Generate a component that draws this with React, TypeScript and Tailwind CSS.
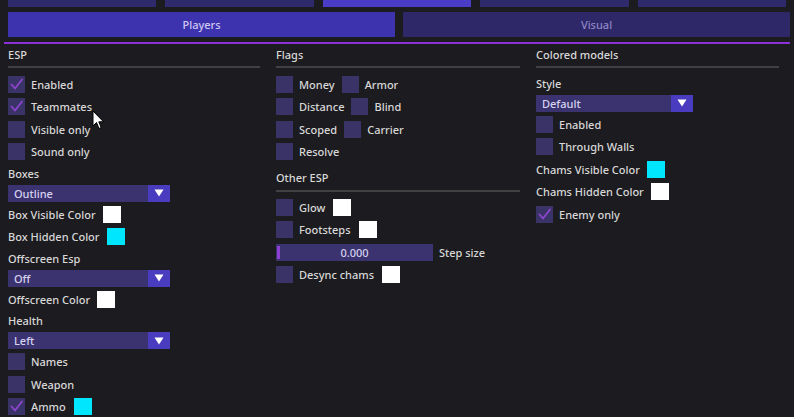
import React from 'react'

const Check = ({ checked = false }: { checked?: boolean }) => (
  <div className="w-[17px] h-[17px] shrink-0 bg-[#3a3367] flex items-center justify-center">
    {checked && (
      <svg width="17" height="17" viewBox="0 0 17 17">
        <path d="M3.5 8.5 L7 12.5 L14 3.5" fill="none" stroke="#8e45cf" strokeWidth="1.8" strokeLinecap="round" strokeLinejoin="round" />
      </svg>
    )}
  </div>
)

const Swatch = ({ color }: { color: string }) => (
  <div className="w-[18px] h-[17px] shrink-0" style={{ backgroundColor: color }} />
)

const CheckRow = ({ label, checked, swatch }: { label: string; checked?: boolean; swatch?: string }) => (
  <div className="h-[22.5px] flex items-center">
    <Check checked={checked} />
    <span className="ml-[6px]">{label}</span>
    {swatch && <div className="ml-[8px]"><Swatch color={swatch} /></div>}
  </div>
)

const ColorRow = ({ label, color }: { label: string; color: string }) => (
  <div className="h-[22.5px] flex items-center gap-[7px]">
    <span>{label}</span>
    <Swatch color={color} />
  </div>
)

const LabelRow = ({ label }: { label: string }) => (
  <div className="h-[20px] flex items-center">{label}</div>
)

const Combo = ({ value, width }: { value: string; width: string }) => (
  <div className="h-[20px] flex items-center">
    <div className={`${width} h-[17px] flex bg-[#3b336f]`}>
      <div className="flex-1 pl-[6px] flex items-center text-[#d6d2f0]">{value}</div>
      <div className="w-[22px] bg-[#4a3cbf] flex items-center justify-center">
        <svg width="10" height="8" viewBox="0 0 10 8">
          <path d="M0.5 0.5 H9.5 L5 7.5 Z" fill="#ffffff" />
        </svg>
      </div>
    </div>
  </div>
)

const Header = ({ title, first }: { title: string; first?: boolean }) => (
  <div className={first ? '' : 'mt-[4px]'}>
    <div className="h-[20px] flex items-center">{title}</div>
    <div className={`${first ? 'mt-[2px]' : 'mt-[3px]'} h-[2px] bg-[#414141]`} />
    <div className={first ? 'h-[5px]' : 'h-[4px]'} />
  </div>
)

export default function App() {
  return (
    <div className="relative w-[794px] h-[417px] overflow-hidden bg-[#1c1b1f] text-[11px] font-medium text-[#d8d8d8] font-['Noto_Sans',sans-serif] leading-none">
      {/* top tab strip, cut off by the window */}
      <div className="flex gap-[9px] px-[8px] h-[7px]">
        <div className="flex-1 bg-[#2f2a6c]" />
        <div className="flex-1 bg-[#2f2a6c]" />
        <div className="flex-1 bg-[#4a3cc6]" />
        <div className="flex-1 bg-[#2f2a6c]" />
        <div className="flex-1 bg-[#2f2a6c]" />
      </div>

      <div className="mt-[5px] flex gap-[8px] pl-[8px] pr-[4px] h-[25px]">
        <div className="flex-1 bg-[#3e33ae] flex items-center justify-center text-[#cdc8f4]">Players</div>
        <div className="flex-1 bg-[#2e2868] flex items-center justify-center text-[#8d86c6]">Visual</div>
      </div>

      <div className="mt-[5px] mx-[4px] h-[2px] bg-[#8b2fd6]" />

      <div className="grid grid-cols-[252px_244px_243px] gap-x-[16px] pl-[8px]">
        <div>
          <Header title="ESP" first />
          <CheckRow label="Enabled" checked />
          <CheckRow label="Teammates" checked />
          <CheckRow label="Visible only" />
          <CheckRow label="Sound only" />
          <LabelRow label="Boxes" />
          <Combo value="Outline" width="w-[162px]" />
          <ColorRow label="Box Visible Color" color="#ffffff" />
          <ColorRow label="Box Hidden Color" color="#00e6ff" />
          <LabelRow label="Offscreen Esp" />
          <Combo value="Off" width="w-[162px]" />
          <ColorRow label="Offscreen Color" color="#ffffff" />
          <LabelRow label="Health" />
          <Combo value="Left" width="w-[162px]" />
          <CheckRow label="Names" />
          <CheckRow label="Weapon" />
          <CheckRow label="Ammo" checked swatch="#00e6ff" />
        </div>

        <div>
          <Header title="Flags" first />
          <div className="h-[22.5px] flex items-center">
            <Check /><span className="ml-[6px]">Money</span>
            <div className="ml-[7px]"><Check /></div><span className="ml-[6px]">Armor</span>
          </div>
          <div className="h-[22.5px] flex items-center">
            <Check /><span className="ml-[6px]">Distance</span>
            <div className="ml-[7px]"><Check /></div><span className="ml-[6px]">Blind</span>
          </div>
          <div className="h-[22.5px] flex items-center">
            <Check /><span className="ml-[6px]">Scoped</span>
            <div className="ml-[7px]"><Check /></div><span className="ml-[6px]">Carrier</span>
          </div>
          <CheckRow label="Resolve" />
          <Header title="Other ESP" />
          <CheckRow label="Glow" swatch="#ffffff" />
          <CheckRow label="Footsteps" swatch="#ffffff" />
          <div className="h-[22.5px] flex items-center gap-[6px]">
            <div className="relative w-[157px] h-[17px] bg-[#3b336f] flex items-center justify-center text-[#d6d2f0]">
              <div className="absolute left-[1px] top-[2px] bottom-[2px] w-[3px] bg-[#8e3fd3]" />
              0.000
            </div>
            <span>Step size</span>
          </div>
          <CheckRow label="Desync chams" swatch="#ffffff" />
        </div>

        <div>
          <Header title="Colored models" first />
          <LabelRow label="Style" />
          <Combo value="Default" width="w-[157px]" />
          <CheckRow label="Enabled" />
          <CheckRow label="Through Walls" />
          <ColorRow label="Chams Visible Color" color="#00e6ff" />
          <ColorRow label="Chams Hidden Color" color="#ffffff" />
          <CheckRow label="Enemy only" checked />
        </div>
      </div>

      {/* mouse pointer */}
      <svg className="absolute left-[92px] top-[110px]" width="13" height="20" viewBox="0 0 13 20">
        <path d="M1 1 L1 16 L4.5 12.5 L7 18.5 L9.2 17.6 L6.8 11.8 L11.5 11.8 Z" fill="#ffffff" stroke="#000000" strokeWidth="1" strokeLinejoin="round" />
      </svg>
    </div>
  )
}
